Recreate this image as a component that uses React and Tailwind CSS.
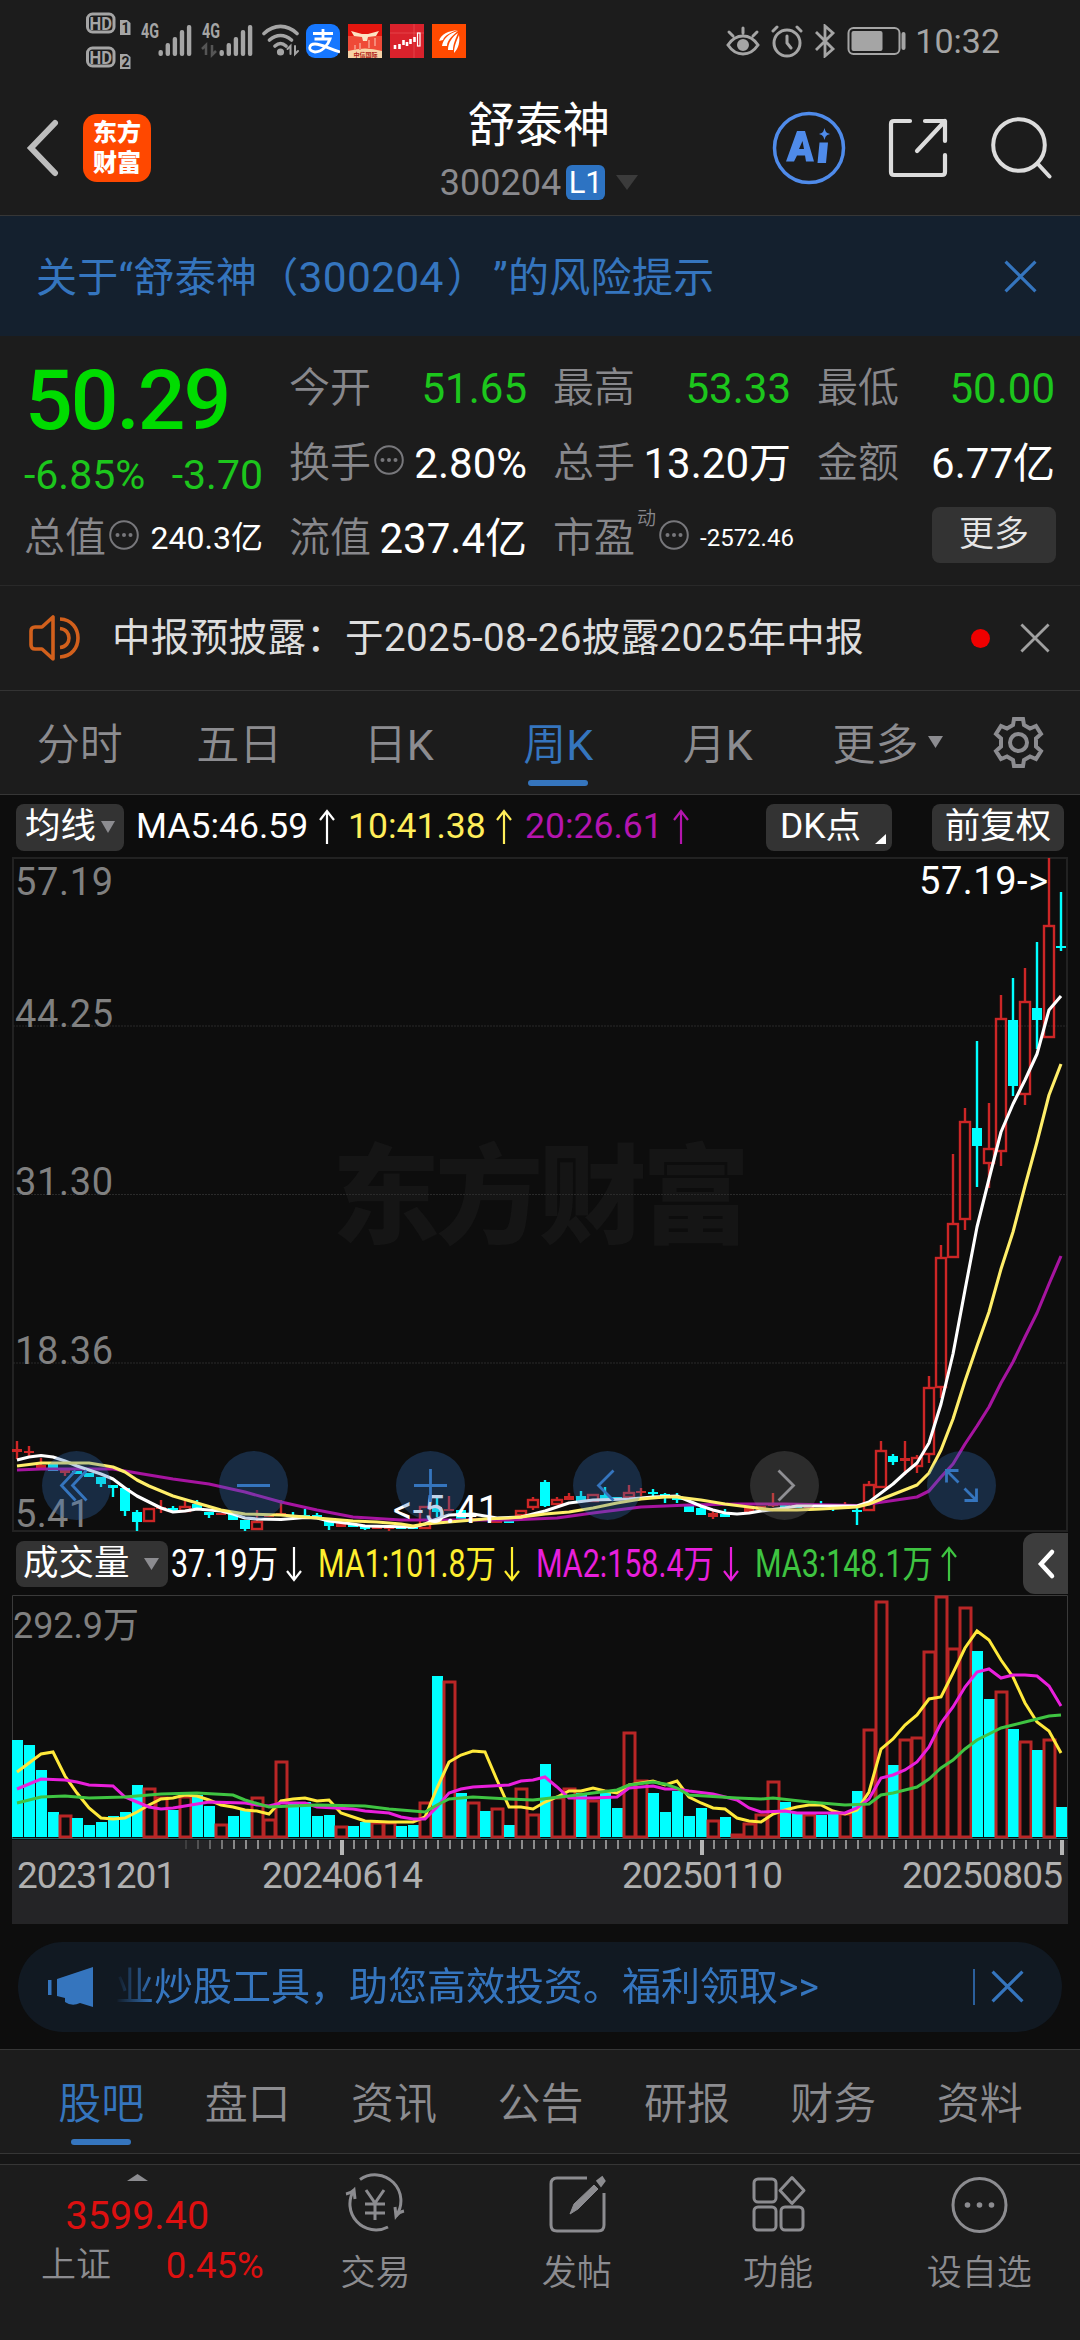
import clsx from "clsx";

// x of the i-th weekly candle
const cx = (i) => 17 + i * 12;

// [up(1)/down(0), high, bodyTop, bodyBottom, low, volumeTop]
const CANDLES = [
  [1, 1441, 1449, 1452, 1459, 1740], [1, 1446, 1451, 1453, 1457, 1745],
  [1, 1458, 1465, 1468, 1468, 1770], [0, 1464, 1464, 1471, 1471, 1812],
  [1, 1470, 1470, 1473, 1476, 1815], [0, 1471, 1471, 1474, 1474, 1818],
  [0, 1473, 1473, 1477, 1477, 1825], [0, 1477, 1477, 1484, 1487, 1822],
  [0, 1485, 1485, 1488, 1497, 1816], [0, 1488, 1488, 1511, 1516, 1812],
  [0, 1510, 1512, 1522, 1531, 1785], [1, 1508, 1508, 1522, 1522, 1788],
  [1, 1500, 1507, 1509, 1513, 1797], [0, 1506, 1508, 1511, 1513, 1810],
  [1, 1501, 1506, 1512, 1512, 1796], [0, 1500, 1504, 1508, 1509, 1795],
  [0, 1512, 1512, 1515, 1518, 1806], [1, 1513, 1513, 1515, 1515, 1824],
  [0, 1513, 1513, 1520, 1520, 1816], [0, 1520, 1520, 1529, 1531, 1810],
  [1, 1510, 1521, 1530, 1530, 1797], [1, 1515, 1515, 1517, 1517, 1819],
  [1, 1500, 1513, 1515, 1515, 1761], [0, 1512, 1515, 1517, 1518, 1803],
  [0, 1509, 1515, 1517, 1518, 1802], [0, 1513, 1515, 1517, 1518, 1816],
  [0, 1521, 1521, 1526, 1530, 1815], [1, 1522, 1523, 1527, 1527, 1826],
  [0, 1524, 1524, 1527, 1527, 1826], [0, 1526, 1526, 1529, 1530, 1822],
  [1, 1526, 1526, 1529, 1529, 1822], [1, 1527, 1527, 1529, 1531, 1822],
  [0, 1526, 1526, 1529, 1529, 1826], [0, 1526, 1526, 1529, 1529, 1825],
  [1, 1506, 1506, 1529, 1529, 1802], [0, 1497, 1507, 1512, 1517, 1676],
  [1, 1496, 1509, 1511, 1511, 1681], [0, 1509, 1510, 1519, 1519, 1793],
  [1, 1518, 1518, 1521, 1521, 1802], [0, 1518, 1518, 1521, 1521, 1811],
  [1, 1520, 1520, 1523, 1523, 1808], [0, 1520, 1520, 1523, 1523, 1825],
  [1, 1510, 1510, 1516, 1516, 1788], [1, 1497, 1499, 1508, 1510, 1814],
  [0, 1480, 1482, 1506, 1507, 1764], [1, 1497, 1499, 1505, 1505, 1797],
  [1, 1493, 1496, 1500, 1500, 1788], [0, 1491, 1496, 1501, 1503, 1793],
  [1, 1494, 1494, 1502, 1502, 1800], [0, 1487, 1495, 1499, 1499, 1793],
  [0, 1497, 1497, 1500, 1500, 1808], [1, 1485, 1492, 1498, 1499, 1732],
  [1, 1488, 1491, 1493, 1496, 1780], [0, 1489, 1492, 1494, 1496, 1793],
  [0, 1493, 1494, 1496, 1503, 1812], [0, 1493, 1497, 1500, 1503, 1791],
  [0, 1506, 1506, 1512, 1512, 1816], [0, 1506, 1508, 1515, 1515, 1808],
  [1, 1511, 1513, 1517, 1519, 1820], [0, 1509, 1514, 1517, 1517, 1817],
  [1, 1513, 1513, 1515, 1515, 1834], [1, 1508, 1508, 1513, 1513, 1823],
  [1, 1506, 1506, 1510, 1510, 1814], [1, 1493, 1504, 1506, 1507, 1781],
  [0, 1505, 1505, 1508, 1508, 1802], [0, 1505, 1505, 1508, 1508, 1813],
  [1, 1505, 1505, 1508, 1508, 1814], [0, 1501, 1505, 1507, 1507, 1815],
  [0, 1505, 1505, 1507, 1511, 1814], [1, 1502, 1506, 1509, 1509, 1813],
  [0, 1506, 1510, 1512, 1525, 1791], [1, 1481, 1484, 1511, 1511, 1729],
  [1, 1441, 1450, 1488, 1488, 1601], [0, 1454, 1456, 1462, 1465, 1765],
  [1, 1441, 1458, 1461, 1475, 1739], [1, 1455, 1457, 1467, 1473, 1737],
  [1, 1376, 1387, 1455, 1463, 1651], [1, 1245, 1257, 1388, 1398, 1596],
  [1, 1154, 1223, 1258, 1258, 1648], [1, 1108, 1121, 1220, 1230, 1607],
  [0, 1041, 1128, 1146, 1187, 1651], [1, 1103, 1148, 1164, 1188, 1699],
  [1, 995, 1018, 1152, 1166, 1691], [0, 978, 1020, 1086, 1096, 1729],
  [1, 968, 1001, 1095, 1105, 1741], [0, 942, 1008, 1020, 1049, 1750],
  [1, 858, 925, 1038, 1038, 1739], [0, 892, 946, 948, 951, 1807],
];

// weeks whose volume colour differs from the candle colour
const DOWN_VOLUME = [0, 1, 2, 81];

const PRICE_LINES = [
  {
    color: "#a614a0",
    points: [[0, 1470], [2, 1469], [8, 1469], [10, 1473], [13, 1479], [16, 1484], [19, 1492], [22, 1502], [25, 1510], [28, 1517], [32, 1520], [41, 1520], [45, 1518], [48, 1513], [52, 1507], [56, 1505], [60, 1504], [64, 1504], [70, 1505.5], [71, 1504], [75, 1497], [76, 1491], [77, 1477], [78, 1464], [79, 1444], [80, 1426], [81, 1407], [82, 1383], [83, 1362], [84, 1337], [85, 1313], [86, 1284], [87, 1256]],
  },
  {
    color: "#fff",
    points: [[0, 1460], [1, 1457], [2, 1455.5], [3, 1457], [4, 1461], [5, 1466], [6, 1470], [7, 1474], [8, 1479], [9, 1488], [10, 1496], [11, 1502], [12, 1508], [13, 1512], [14, 1511], [15, 1509], [16, 1510], [17, 1511], [18, 1514], [19, 1518], [20, 1519], [22, 1519.5], [24, 1517.5], [25, 1518], [26, 1521], [28, 1524], [29, 1526], [33, 1527], [34, 1524], [35, 1519], [36, 1515], [38, 1514], [39, 1516], [40, 1518], [42, 1517], [43, 1514], [44, 1511], [45, 1507], [46, 1503], [48, 1500], [51, 1499], [53, 1497], [55, 1496], [56, 1501], [57, 1506], [58, 1510], [59, 1513], [60, 1514], [61, 1513], [62, 1511], [64, 1508], [65, 1506], [70, 1506], [71, 1502], [72, 1493], [73, 1484], [74, 1473], [75, 1463], [76, 1443], [77, 1404], [78, 1354], [79, 1290], [80, 1227], [81, 1179], [82, 1132], [83, 1104], [84, 1080], [85, 1054], [86, 1010], [87, 996]],
  },
  {
    color: "#ffee6a",
    points: [[0, 1466], [2, 1463], [4, 1463], [6, 1463], [8, 1467], [9, 1472], [10, 1480], [11, 1486], [13, 1496], [15, 1503], [17, 1510], [19, 1514], [22, 1515], [24, 1517], [26, 1519], [28, 1521], [30, 1522], [32, 1524], [33, 1526], [34, 1524], [37, 1521], [39, 1519], [41, 1518], [42, 1517], [44, 1514], [46, 1512], [48, 1508], [50, 1503], [52, 1499], [54, 1497], [55, 1497], [57, 1500], [59, 1504], [61, 1507], [63, 1510], [65, 1510], [67, 1509], [70, 1507], [71, 1504], [75, 1485], [76, 1473], [77, 1450], [78, 1419], [79, 1381], [80, 1346], [81, 1312], [82, 1269], [83, 1232], [84, 1186], [85, 1142], [86, 1095], [87, 1064]],
  },
];

const VOLUME_LINES = [
  {
    color: "#ffe93b",
    points: [[0, 1772], [1, 1763], [2, 1754], [3, 1752], [4, 1776], [5, 1793], [6, 1808], [7, 1818], [8, 1819], [9, 1818], [10, 1812], [11, 1805], [12, 1799], [13, 1798], [14, 1795], [15, 1796], [16, 1800], [17, 1805], [18, 1807], [19, 1810], [20, 1811], [21, 1814], [22, 1801], [23, 1799], [24, 1798], [25, 1801], [26, 1800], [27, 1813], [28, 1817], [29, 1821], [31, 1822], [33, 1822], [34, 1817], [35, 1788], [36, 1762], [37, 1755], [38, 1751], [39, 1752], [40, 1780], [41, 1807], [42, 1807], [43, 1809], [44, 1802], [45, 1797], [46, 1791], [47, 1791], [48, 1788], [49, 1791], [50, 1793], [51, 1785], [52, 1783], [53, 1781], [54, 1785], [55, 1781], [56, 1797], [57, 1803], [58, 1808], [59, 1809], [60, 1818], [61, 1821], [62, 1822], [63, 1814], [64, 1810], [65, 1807], [66, 1805], [67, 1805], [68, 1811], [69, 1814], [70, 1810], [71, 1792], [72, 1749], [73, 1739], [74, 1725], [75, 1715], [76, 1699], [77, 1697], [78, 1673], [79, 1648], [80, 1631], [81, 1640], [82, 1660], [83, 1677], [84, 1703], [85, 1722], [86, 1731], [87, 1753]],
  },
  {
    color: "#ea1fdc",
    points: [[0, 1789], [2, 1779], [4, 1780], [5, 1782], [6, 1785], [8, 1786], [9, 1797], [10, 1802], [11, 1807], [12, 1809], [13, 1808], [14, 1806], [15, 1804], [16, 1802], [19, 1803], [20, 1805], [21, 1806], [22, 1803], [24, 1803], [25, 1807], [28, 1809], [29, 1811], [31, 1813], [32, 1817], [33, 1819], [34, 1819], [35, 1807], [36, 1793], [37, 1789], [38, 1787], [41, 1785], [42, 1781], [43, 1780], [44, 1777], [45, 1787], [46, 1798], [48, 1798], [50, 1797], [51, 1788], [53, 1786], [54, 1789], [55, 1789], [56, 1791], [58, 1794], [60, 1800], [61, 1808], [62, 1812], [64, 1811], [65, 1813], [69, 1813], [70, 1808], [71, 1799], [72, 1778], [73, 1775], [74, 1770], [75, 1762], [76, 1747], [77, 1723], [78, 1707], [79, 1687], [80, 1672], [81, 1669], [82, 1678], [83, 1675], [84, 1675], [85, 1676], [86, 1686], [87, 1706]],
  },
  {
    color: "#3fc442",
    points: [[0, 1803], [2, 1797], [4, 1796], [6, 1798], [9, 1797], [12, 1794], [15, 1793], [18, 1795], [19, 1800], [21, 1807], [25, 1805], [29, 1806], [31, 1809], [34, 1812], [35, 1805], [36, 1799], [38, 1797], [41, 1799], [43, 1800], [46, 1796], [50, 1790], [51, 1785], [53, 1782], [54, 1784], [55, 1788], [56, 1795], [60, 1798], [62, 1799], [63, 1798], [66, 1802], [69, 1805], [71, 1804], [72, 1795], [73, 1793], [75, 1787], [76, 1779], [77, 1768], [78, 1760], [79, 1749], [80, 1740], [81, 1734], [82, 1728], [83, 1725], [84, 1722], [86, 1716], [87, 1715]],
  },
];

const toPoints = (points) => points.map(([i, y]) => `${cx(i)},${y}`).join(" ");

function Cross({ size, className, width = 3 }) {
  return (
    <svg width={size} height={size} viewBox="0 0 32 32" className={className}>
      <path d="M1.5 1.5 30.5 30.5M30.5 1.5 1.5 30.5" stroke="currentColor" strokeWidth={width} />
    </svg>
  );
}

function Dots() {
  return (
    <svg width="30" height="30" viewBox="0 0 30 30" className="shrink-0 text-[#77777b]">
      <circle cx="15" cy="15" r="13.8" fill="none" stroke="currentColor" strokeWidth="2" />
      <circle cx="8.5" cy="15" r="2" fill="currentColor" />
      <circle cx="15" cy="15" r="2" fill="currentColor" />
      <circle cx="21.5" cy="15" r="2" fill="currentColor" />
    </svg>
  );
}

function Triangle({ className, w = 14, h = 12 }) {
  return (
    <svg width={w} height={h} viewBox="0 0 14 12" preserveAspectRatio="none" className={className}>
      <path d="M0 0h14L7 12z" fill="currentColor" />
    </svg>
  );
}

function Arrow({ down, className }) {
  return (
    <svg width="18" height="36" viewBox="0 0 18 36" className={clsx(className, down && "rotate-180")}>
      <path d="M9 35V2M2 11 9 2l7 9" fill="none" stroke="currentColor" strokeWidth="2.2" />
    </svg>
  );
}

function Signal({ data }) {
  return (
    <svg width="52" height="36" viewBox="0 0 52 36" className="overflow-visible text-[#a5a5a5]">
      <text x="0" y="15" fontSize="20" fontWeight="700" textLength="18" lengthAdjust="spacingAndGlyphs" fill="currentColor">4G</text>
      {data && <path d="M4 32V22l-4 4M10 22v10l4-4" fill="none" stroke="#555" strokeWidth="2.5" />}
      {[6, 13, 19, 26, 31].map((h, i) => (
        <rect key={h} x={17.5 + i * 7.1} y={33 - h} width="4.4" height={h} rx="2" fill="currentColor" />
      ))}
    </svg>
  );
}

function StatusBar() {
  return (
    <div className="flex h-20 items-start justify-between pl-[86px] pr-[80px]">
      <div className="flex items-start">
        <svg width="46" height="60" viewBox="0 0 46 60" className="mt-[11px] overflow-visible">
          {[0, 34].map((y, i) => (
            <g key={y}>
              <rect x="1.5" y={y + 3} width="26.5" height="18" rx="5" fill="#1c1c1c" stroke="#a5a5a5" strokeWidth="3" />
              <text x="3.5" y={y + 18.5} fontSize="18" fontWeight="700" textLength="22.5" lengthAdjust="spacingAndGlyphs" fill="#a5a5a5">HD</text>
              <path d={`M34 ${y + 9}h7l3.500 3v12H34z`} fill="#a5a5a5" />
              <text x="35.5" y={y + 21.5} fontSize="14" fontWeight="700" fill="#1c1c1c">{i + 1}</text>
            </g>
          ))}
        </svg>
        <div className="ml-[9px] mt-[23px] flex items-start">
          <Signal />
          <div className="ml-[9px]"><Signal data /></div>
          <svg width="38" height="34" viewBox="0 0 38 34" className="ml-[8px]" fill="none" stroke="#a5a5a5" strokeWidth="3.6" strokeLinecap="round">
            <path d="M2 10.500C12 1 25 1 35 10.500M7.500 17c7-6 15-6 22 0M13 23c4-3.500 7-3.500 11 0" />
            <circle cx="18.500" cy="29" r="1.800" fill="#a5a5a5" />
            <path d="M28.500 31v-8l-3 3M33 23v8l3-3" strokeWidth="2" />
          </svg>
        </div>
        <div className="ml-[6px] mt-[24px] flex gap-2">
          <div className="flex h-[34px] w-[34px] items-center justify-center rounded-[9px] bg-[#1677ff]">
            <svg width="34" height="34" viewBox="0 0 34 34" fill="none" stroke="#fff" strokeWidth="2.800">
              <path d="M7 9.500h20M17 5v10M8.500 15H24c-2 6-8 13-15 13-8-1-6-8 0-8 7 0 14 5 25 8" />
            </svg>
          </div>
          <svg width="34" height="34" viewBox="0 0 34 34">
            <rect width="34" height="34" fill="#e3160f" />
            <rect y="12" width="34" height="16" fill="#ef4a38" />
            <path d="M0 27q17-5 34 0v7H0z" fill="#f7d3a6" />
            <path d="m3 7 11 3h6l11-3-3 5-8 1-1 4h-4l-1-4-8-1z" fill="#fce3c3" />
            <path d="M7 26v-5M12 26v-7M21 24v-8M27 22v-8" stroke="#f58a78" strokeWidth="2" />
            <text x="5.500" y="32.500" fontSize="6" fontWeight="700" fill="#b02015">中信国际</text>
          </svg>
          <svg width="34" height="34" viewBox="0 0 34 34">
            <rect width="34" height="34" fill="#d9222c" />
            <path d="M0 9h34M24 0v34" stroke="#ec5a5e" strokeWidth=".6" />
            <path d="M5 21v4M9.500 20v5M13.500 16v5M17 18v4M20.500 15v5M24.500 13v5" stroke="#fff" strokeWidth="2.600" />
            <rect x="27.500" y="9" width="2.500" height="13" fill="none" stroke="#fff" strokeWidth="1.200" />
          </svg>
          <svg width="34" height="34" viewBox="0 0 34 34">
            <rect width="34" height="34" fill="#ff4a00" />
            <path d="M7 17C9 10 16 7 26 6 19 8 12 12 11 16zM10 22c1-7 7-13 16-15-5 4-11 9-11 15zM16 26c0-7 4-13 10-17-2 5-5 11-5 17zM22 29c0-7 3-13 5-18 1 6 0 13-5 18z" fill="#fff" />
          </svg>
        </div>
      </div>
      <div className="flex items-center pt-[23px] text-[#a5a5a5]">
        <svg width="34" height="34" viewBox="0 0 34 34" fill="none" stroke="currentColor" strokeWidth="3" strokeLinecap="round">
          <path d="M2 21c8-12 22-12 30 0-8 12-22 12-30 0zM17 9V4M7 12 3 8M27 12l4-4" />
          <circle cx="17" cy="21" r="4.500" fill="currentColor" />
        </svg>
        <svg width="32" height="34" viewBox="0 0 32 34" className="ml-[11px]" fill="none" stroke="currentColor" strokeWidth="3" strokeLinecap="round">
          <circle cx="16" cy="19" r="13" />
          <path d="M16 12v7l4 5M2 7l4-4M30 7l-4-4" />
        </svg>
        <svg width="22" height="34" viewBox="0 0 22 34" className="ml-[11px]" fill="none" stroke="currentColor" strokeWidth="2.800">
          <path d="m2 8 17 17-8 7V2l8 7L2 26" />
        </svg>
        <svg width="60" height="30" viewBox="0 0 60 30" className="ml-[11px]">
          <rect x="1.500" y="2" width="51" height="26" rx="5" fill="none" stroke="currentColor" strokeWidth="2" />
          <rect x="4.500" y="5" width="31" height="20" rx="2" fill="currentColor" />
          <rect x="54.500" y="6" width="4" height="18" rx="2" fill="currentColor" />
        </svg>
        <span className="ml-[8px] text-[34px] leading-[36px]">10:32</span>
      </div>
    </div>
  );
}

function Header() {
  return (
    <header className="flex h-[136px] items-center justify-between border-b border-[#363636] pl-[26px] pr-[28px]">
      <div className="flex w-[300px] items-center">
        <svg width="34" height="58" viewBox="0 0 34 58" fill="none" stroke="#bdbdbd" strokeWidth="6" strokeLinecap="round">
          <path d="M29 4 5 29l24 25" />
        </svg>
        <div className="ml-[23px] flex h-[68px] w-[68px] flex-col items-center justify-center rounded-[14px] bg-[#ff4800] text-[24px] font-black leading-[30px] text-white">
          <span>东方</span>
          <span>财富</span>
        </div>
      </div>
      <div className="flex flex-col items-center pt-[10px]">
        <h1 className="text-[47.500px] leading-[60px] text-white">舒泰神</h1>
        <div className="flex items-center text-[#8a8a8e]">
          <span className="text-[36px] leading-[54px]">300204</span>
          <span className="ml-[5px] flex h-[35px] w-[39px] items-center justify-center rounded-[6px] bg-[#2d73c2] text-[31px] leading-none text-white">L1</span>
          <Triangle w={22} h={15} className="ml-[11px] text-[#3b3b3b]" />
        </div>
      </div>
      <div className="flex w-[300px] items-center justify-end">
        <svg width="74" height="74" viewBox="0 0 74 74" className="text-[#4f8bea]">
          <circle cx="37" cy="37" r="34.500" fill="none" stroke="currentColor" strokeWidth="3.500" />
          <path d="M14 50.500 25 20h8l9 30.500h-8l-1-6h-8l-3 6zM27 38h5l-1.500-8z" fill="currentColor" />
          <path d="M47.500 31.500h8.500L54 52h-8.500zM52.500 17c1 4 2 5 5.500 6-3.500 1-4.500 2-5.500 6-1-4-2-5-5.500-6 3.500-1 4.500-2 5.500-6z" fill="currentColor" />
        </svg>
        <svg width="62" height="62" viewBox="0 0 62 62" className="ml-[42px]" fill="none" stroke="#dcdcdc" strokeWidth="4.200" strokeLinecap="round" strokeLinejoin="round">
          <path d="M22 4H6q-3 0-3 3v48q0 3 3 3h48q3 0 3-3V38M37 4h20v20M57 4 29 34" />
        </svg>
        <svg width="62" height="64" viewBox="0 0 62 64" className="ml-[40px]" fill="none" stroke="#dcdcdc" strokeWidth="4" strokeLinecap="round">
          <circle cx="29" cy="29" r="25.800" />
          <path d="m47.500 47.500 12 13" />
        </svg>
      </div>
    </header>
  );
}

function Stat({ label, value, dots, green }) {
  return (
    <div className="flex h-[75px] items-center justify-between whitespace-nowrap">
      <span className="flex items-center text-[41px] font-[350] text-[#88888c]">
        {label}
        {dots && <span className="-mt-[8px] ml-[3px]"><Dots /></span>}
      </span>
      <span className={clsx("text-[42px]", green ? "text-[#1cc61c]" : "text-white")}>{value}</span>
    </div>
  );
}

function Quote() {
  return (
    <section className="flex h-[250px] gap-[26px] border-b border-[#292929] px-[25px] pt-[15px]">
      <div className="w-[238px] shrink-0">
        <div className="h-[95px] pt-[8px] text-[84px] font-medium leading-[84px] tracking-[-2px] text-[#00dc00]">50.29</div>
        <div className="-ml-[1px] flex h-[55px] items-center justify-between pt-[5px] text-[41px] text-[#1cc61c]">
          <span>-6.85%</span>
          <span>-3.70</span>
        </div>
        <div className="-ml-[1px] flex h-[75px] items-center justify-between whitespace-nowrap">
          <span className="flex items-center text-[41px] font-[350] text-[#88888c]">
            总值<span className="-mt-[8px] ml-[3px]"><Dots /></span>
          </span>
          <span className="-mt-[2px] text-[32px] text-white">240.3亿</span>
        </div>
      </div>
      <div className="grid flex-1 grid-cols-3 content-start gap-x-[26px]">
        <Stat label="今开" value="51.65" green />
        <Stat label="最高" value="53.33" green />
        <Stat label="最低" value="50.00" green />
        <Stat label="换手" value="2.80%" dots />
        <Stat label="总手" value="13.20万" />
        <Stat label="金额" value="6.77亿" />
        <Stat label="流值" value="237.4亿" />
        <div className="flex h-[75px] items-center whitespace-nowrap">
          <span className="text-[41px] font-[350] text-[#88888c]">市盈</span>
          <span className="-mt-[38px] ml-[2px] text-[19px] font-[350] text-[#88888c]">动</span>
          <span className="-mt-[8px] ml-[3px]"><Dots /></span>
          <span className="-mt-[2px] ml-[11px] text-[24px] text-white">-2572.46</span>
        </div>
        <div className="flex h-[75px] items-center justify-end">
          <button className="-mr-[1px] -mt-[8px] h-[56px] w-[124px] rounded-[8px] bg-[#333] text-[35px] font-[350] leading-[56px] text-[#e6e6e6]">更多</button>
        </div>
      </div>
    </section>
  );
}

function Notice() {
  return (
    <div className="flex h-[105px] items-center border-b border-[#333] pl-[28px] pr-[30px]">
      <svg width="54" height="46" viewBox="0 0 54 46" fill="none" stroke="#d2601c" strokeWidth="3.600">
        <path d="M25 2v42L14 34H7q-4 0-4-4V16q0-4 4-4h7zM32 4c24 1 24 37 0 38M32 13.500c12 1 12 18 0 19" strokeLinejoin="round" />
      </svg>
      <p className="ml-[30px] flex-1 whitespace-nowrap text-[38.5px] tracking-[0.350px] text-[#dedede]">中报预披露：于2025-08-26披露2025年中报</p>
      <span className="mr-[30px] h-[19px] w-[19px] rounded-full bg-[#f00000]" />
      <Cross size={30} className="text-[#a0a0a0]" />
    </div>
  );
}

const PERIODS = [
  { name: "分时" },
  { name: "五日" },
  { name: "日", k: true },
  { name: "周", k: true, active: true },
  { name: "月", k: true },
];

function PeriodTabs() {
  return (
    <nav className="flex h-[104px] items-stretch border-b border-[#363636] text-[43px] font-[350] text-[#8c8c90]">
      {PERIODS.map((p) => (
        <div key={p.name} className={clsx("flex w-[159.500px] flex-col items-center pt-[24px] leading-[60px]", p.active && "text-[#3575be]")}>
          <span className="whitespace-nowrap">{p.name}{p.k && <span className="font-normal">K</span>}</span>
          {p.active && <span className="mt-[5px] h-[6px] w-[60px] rounded-full bg-[#3575be]" />}
        </div>
      ))}
      <div className="flex flex-1 items-center justify-between pl-[35px] pr-[35px]">
        <span className="flex items-center gap-[9px] pt-[5px]">更多<Triangle h={12} w={15} className="-mt-[6px]" /></span>
        <svg width="53" height="53" viewBox="0 0 53 53" fill="none" stroke="currentColor" strokeWidth="4">
          <path d="M22 3h9l1 6 6 3.500 6-2.500 5 8-5 4.500v8l5 4.500-5 8-6-2.500-6 3.500-1 6h-9l-1-6-6-3.500-6 2.500-5-8 5-4.500v-8L4 18l5-8 6 2.500L21 9z" />
          <circle cx="26.500" cy="26.500" r="8.500" />
        </svg>
      </div>
    </nav>
  );
}

function MaRow() {
  return (
    <div className="flex h-[61px] items-center whitespace-nowrap px-[16px] pt-[3px] text-[35.500px] text-white">
      <div className="flex h-[47px] w-[108px] items-center justify-between rounded-[8px] bg-[#333] pl-[9px] pr-[9px]">
        均线<Triangle className="text-[#8c8c90]" />
      </div>
      <span className="ml-[12px] w-[182px]">MA5:46.59</span>
      <Arrow />
      <span className="ml-[12px] w-[147px] text-[#ffee5a]">10:41.38</span>
      <Arrow className="text-[#ffee5a]" />
      <span className="ml-[12px] w-[147px] text-[#b415ae]">20:26.61</span>
      <Arrow className="text-[#b415ae]" />
      <div className="relative ml-auto flex h-[47px] w-[126px] items-center rounded-[8px] bg-[#333] pl-[14px]">
        DK点
        <svg width="11" height="10" viewBox="0 0 11 10" className="absolute bottom-[7px] right-[6px]">
          <path d="M11 0v10H0z" fill="#fff" />
        </svg>
      </div>
      <div className="ml-[40px] flex h-[47px] w-[132px] items-center justify-center rounded-[8px] bg-[#333]">前复权</div>
    </div>
  );
}

function Candle({ data, i }) {
  const [up, high, top, bottom, low] = data;
  const color = up ? "#cc2626" : "#00ffff";
  const x = cx(i);
  const hollow = up && bottom - top > 5;
  return (
    <g stroke={color} strokeWidth="2.4">
      <path d={`M${x} ${high}V${top}M${x} ${bottom}V${low}`} />
      {hollow ? (
        <rect x={x - 5} y={top + 1} width="10" height={bottom - top - 2} fill="none" />
      ) : (
        <rect x={x - 5} y={top} width="10" height={Math.max(bottom - top, 2)} fill={color} stroke="none" />
      )}
    </g>
  );
}

const CONTROLS = [
  { x: 76.5, d: "M-1-15-15 0-1 15M10-15-4 0 10 15" },
  { x: 253.5, d: "M-16.500 0h33" },
  { x: 430.5, d: "M-16.500 0h33M0-16.500v33" },
  { x: 607.5, d: "M6-15-9 0 6 15" },
  { x: 784.5, d: "M-6-15 9 0-6 15", off: true },
  { x: 961.5, d: "M-3-3-15-15M-15-3v-12h12M3 3l12 12M15 3v12H3" },
];

function PriceChart() {
  return (
    <svg width="1080" height="677" viewBox="0 856 1080 677" className="block overflow-visible">
      <rect x="13" y="858" width="1054" height="673" fill="none" stroke="#222" strokeWidth="2" />
      <text x="541" y="1235" textAnchor="middle" fontSize="108" fontWeight="900" textLength="418" fill="#151515">东方财富</text>
      {[1026, 1194.5, 1363].map((y) => (
        <path key={y} d={`M13 ${y}H1067`} stroke="#2a2a2a" strokeWidth="1" strokeDasharray="2 1" />
      ))}
      {CANDLES.map((c, i) => (
        <Candle key={i} data={c} i={i} />
      ))}
      {PRICE_LINES.map((l) => (
        <polyline key={l.color} points={toPoints(l.points)} fill="none" stroke={l.color} strokeWidth="3.1" strokeLinejoin="round" />
      ))}
      <g fontSize="38" fill="#808080">
        <text x="15" y="895" textLength="98">57.19</text>
        <text x="15" y="1027" textLength="98">44.25</text>
        <text x="15" y="1195" textLength="98">31.30</text>
        <text x="15" y="1364" textLength="98">18.36</text>
        <text x="15" y="1527" textLength="75">5.41</text>
      </g>
      <g fontSize="38" fill="#fff">
        <text x="919" y="894" textLength="129">57.19-&gt;</text>
        <text x="393" y="1523" textLength="106">&lt;-5.41</text>
      </g>
      {CONTROLS.map((c) => (
        <g key={c.x} transform={`translate(${c.x} 1485.5)`}>
          <circle r="34.500" fill={c.off ? "#808080" : "#3271be"} fillOpacity={c.off ? 0.27 : 0.3} />
          <path d={c.d} fill="none" stroke={c.off ? "#8f8f93" : "#3575be"} strokeWidth="2.800" />
        </g>
      ))}
    </svg>
  );
}

// Label squeezed to a fixed width, as the volume legend has little room
function Squeezed({ width, children, className }) {
  return (
    <svg width={width} height="46" viewBox={`0 0 ${width} 46`} className={clsx("overflow-visible", className)}>
      <text x="0" y="36" fontSize="38" textLength={width} lengthAdjust="spacingAndGlyphs" fill="currentColor">{children}</text>
    </svg>
  );
}

function VolumeRow() {
  return (
    <div className="flex h-[61px] items-center pl-[16px] pr-[12px] text-white">
      <div className="flex h-[46px] w-[152px] items-center justify-between rounded-[8px] bg-[#333] pl-[7px] pr-[9px] text-[35.500px]">
        成交量<Triangle w={15} className="text-[#8c8c90]" />
      </div>
      <Squeezed width={107} className="ml-[3px]">37.19万</Squeezed>
      <Arrow down className="ml-[7px]" />
      <Squeezed width={178} className="ml-[15px] text-[#ffee2f]">MA1:101.8万</Squeezed>
      <Arrow down className="ml-[7px] text-[#ffee2f]" />
      <Squeezed width={178} className="ml-[15px] text-[#e81fdc]">MA2:158.4万</Squeezed>
      <Arrow down className="ml-[8px] text-[#e81fdc]" />
      <Squeezed width={178} className="ml-[15px] text-[#3ec441]">MA3:148.1万</Squeezed>
      <Arrow className="ml-[7px] text-[#3ec441]" />
      <div className="ml-auto flex h-[61px] w-[45px] items-center justify-center rounded-l-[12px] bg-[#3d3d3d]">
        <svg width="20" height="32" viewBox="0 0 20 32" fill="none" stroke="#fff" strokeWidth="4.500" strokeLinecap="round">
          <path d="M16 4 5 16l11 12" />
        </svg>
      </div>
    </div>
  );
}

function VolumeChart() {
  return (
    <svg width="1080" height="246" viewBox="0 1594 1080 246" className="block">
      <path d="M12.500 1838V1595.500H1067.500V1838" fill="none" stroke="#3a3a3a" />
      <path d="M12 1838.500H1068" stroke="#156b6b" />
      {CANDLES.map(([up, , , , , top], i) =>
        up && !DOWN_VOLUME.includes(i) ? (
          <rect key={i} x={cx(i) - 5} y={top + 1} width="11" height={1836 - top} fill="none" stroke="#b92626" strokeWidth="3" />
        ) : (
          <rect key={i} x={cx(i) - 5} y={top} width="11" height={1837 - top} fill="#00ffff" />
        )
      )}
      {VOLUME_LINES.map((l) => (
        <polyline key={l.color} points={toPoints(l.points)} fill="none" stroke={l.color} strokeWidth="3" />
      ))}
      <text x="13" y="1638" fontSize="36" fill="#808080" textLength="126">292.9万</text>
    </svg>
  );
}

function Timeline() {
  const ticks = Array.from({ length: 74 }, (_, i) => i);
  return (
    <svg width="1080" height="84" viewBox="0 1840 1080 84" className="block">
      <rect x="12" y="1840" width="1056" height="84" fill="#242426" />
      {ticks.map((i) => {
        const major = (i - 13) % 30 === 0;
        return (
          <path
            key={i}
            d={`M${186 + i * 12} 1840v${major ? 15 : 9}`}
            stroke={major ? "#b5b5b5" : "#8c8c8c"}
            strokeWidth={major ? 4 : 2}
            opacity={Math.min(1, 0.25 + i * 0.18)}
          />
        );
      })}
      <g fontSize="37" fill="#b0b0b0">
        <text x="17" y="1888" textLength="159">20231201</text>
        <text x="262" y="1888" textLength="161">20240614</text>
        <text x="622" y="1888" textLength="161">20250110</text>
        <text x="902" y="1888" textLength="161">20250805</text>
      </g>
    </svg>
  );
}

function Promo() {
  return (
    <div className="flex h-[125px] items-center px-[18px]">
      <div className="flex h-[90px] flex-1 items-center rounded-full bg-[#111922] pl-[30px] pr-[38px] text-[#3575be]">
        <svg width="46" height="40" viewBox="0 0 46 40" fill="currentColor">
          <path d="M0 13h3.500v15H0zM9 12 45 0v40l-13-4q-8 4-15-1v-4l-8-2z" />
        </svg>
        <p className="ml-[21px] flex-1 whitespace-nowrap text-[39px] leading-[60px] [mask-image:linear-gradient(to_right,transparent,black_40px)]">
          业炒股工具，助您高效投资。福利领取&gt;&gt;
        </p>
        <span className="mr-[16px] h-[36px] w-[2px] bg-[#2b5f9c]" />
        <Cross size={33} />
      </div>
    </div>
  );
}

function InfoTabs() {
  return (
    <nav className="flex h-[105px] border-y border-[#363636] bg-[#1c1c1c] pl-[28px] pr-[27px] text-[43px] font-[350] text-[#8c8c90]">
      {["股吧", "盘口", "资讯", "公告", "研报", "财务", "资料"].map((tab, i) => (
        <div key={tab} className={clsx("flex flex-1 flex-col items-center pt-[24px] leading-[60px]", i === 0 && "text-[#3575be]")}>
          <span>{tab}</span>
          {i === 0 && <span className="mt-[5px] h-[6px] w-[60px] rounded-full bg-[#3575be]" />}
        </div>
      ))}
    </nav>
  );
}

const ACTIONS = [
  {
    label: "交易",
    icon: (
      <>
        <path d="M17 6.500A26 26 0 0 1 53 43M45 54A26 26 0 0 1 11 17" />
        <path d="M3 21q5-1 8-4l1 9M61 38q-5 1-8 5l-1-9" />
        <path d="m23 17 9 13 9-13M32 30v17M22 31h20M22 40h20" />
      </>
    ),
  },
  {
    label: "发帖",
    icon: (
      <>
        <path d="M42 5H12q-6 0-6 6v41q0 6 6 6h41q6 0 6-6V20" />
        <path d="M25 41l4-10L49 12l4 4-20 20z" fill="currentColor" strokeWidth="1" />
        <path d="m53 8 4-3 2 3-3 4z" fill="currentColor" />
      </>
    ),
  },
  {
    label: "功能",
    icon: (
      <>
        <rect x="8" y="6" width="22" height="23" rx="4" />
        <rect x="8" y="34" width="22" height="23" rx="4" />
        <rect x="35" y="34" width="22" height="23" rx="4" />
        <path d="M46 4.500 58 17.500 46 30.500 34 17.500z" strokeLinejoin="round" />
      </>
    ),
  },
  {
    label: "设自选",
    icon: (
      <>
        <circle cx="32.500" cy="32" r="26.500" />
        <g fill="currentColor" stroke="none">
          <circle cx="20.500" cy="32" r="2.800" />
          <circle cx="32.500" cy="32" r="2.800" />
          <circle cx="44.500" cy="32" r="2.800" />
        </g>
      </>
    ),
  },
];

function BottomBar() {
  return (
    <footer className="flex flex-1 border-t border-[#363636] text-[#8c8c90]">
      <div className="flex w-[275px] flex-col items-center pt-[9px]">
        <Triangle w={21} h={7} className="rotate-180" />
        <span className="mt-[10px] text-[39.500px] leading-[50px] text-[#dd1010]">3599.40</span>
        <div className="flex w-full items-center justify-between pl-[41px] pr-[11px]">
          <span className="text-[35px] font-[350] leading-[50px]">上证</span>
          <span className="text-[36.500px] leading-[50px] text-[#dd1010]">0.45%</span>
        </div>
      </div>
      {ACTIONS.map((a) => (
        <div key={a.label} className="flex w-[201.500px] flex-col items-center pt-[8px]">
          <svg width="64" height="64" viewBox="0 0 64 64" fill="none" stroke="currentColor" strokeWidth="3">
            {a.icon}
          </svg>
          <span className="mt-[12px] text-[35px] font-[350] leading-[50px]">{a.label}</span>
        </div>
      ))}
    </footer>
  );
}

export default function App() {
  return (
    <div className="flex h-[2340px] w-[1080px] flex-col overflow-hidden bg-[#1c1c1c] font-[Roboto,'Noto_Sans_CJK_SC',sans-serif]">
      <StatusBar />
      <Header />
      <div className="flex h-[120px] items-center justify-between bg-[#14202e] pl-[36px] pr-[43px] text-[#3575be]">
        <p className="whitespace-nowrap pt-[3px] text-[41px] tracking-[0.300px] [text-spacing-trim:space-all]">
          关于“舒泰神（<span className="text-[42.500px]">300204</span>
          <span className="ml-[3px]">）</span>
          <span className="ml-[5px]">”的风险提示</span>
        </p>
        <Cross size={33} />
      </div>
      <Quote />
      <Notice />
      <PeriodTabs />
      <main className="bg-[#0d0d0d]">
        <MaRow />
        <PriceChart />
        <VolumeRow />
        <VolumeChart />
        <Timeline />
        <Promo />
      </main>
      <InfoTabs />
      <div className="h-[10px] bg-[#161616]" />
      <BottomBar />
    </div>
  );
}
